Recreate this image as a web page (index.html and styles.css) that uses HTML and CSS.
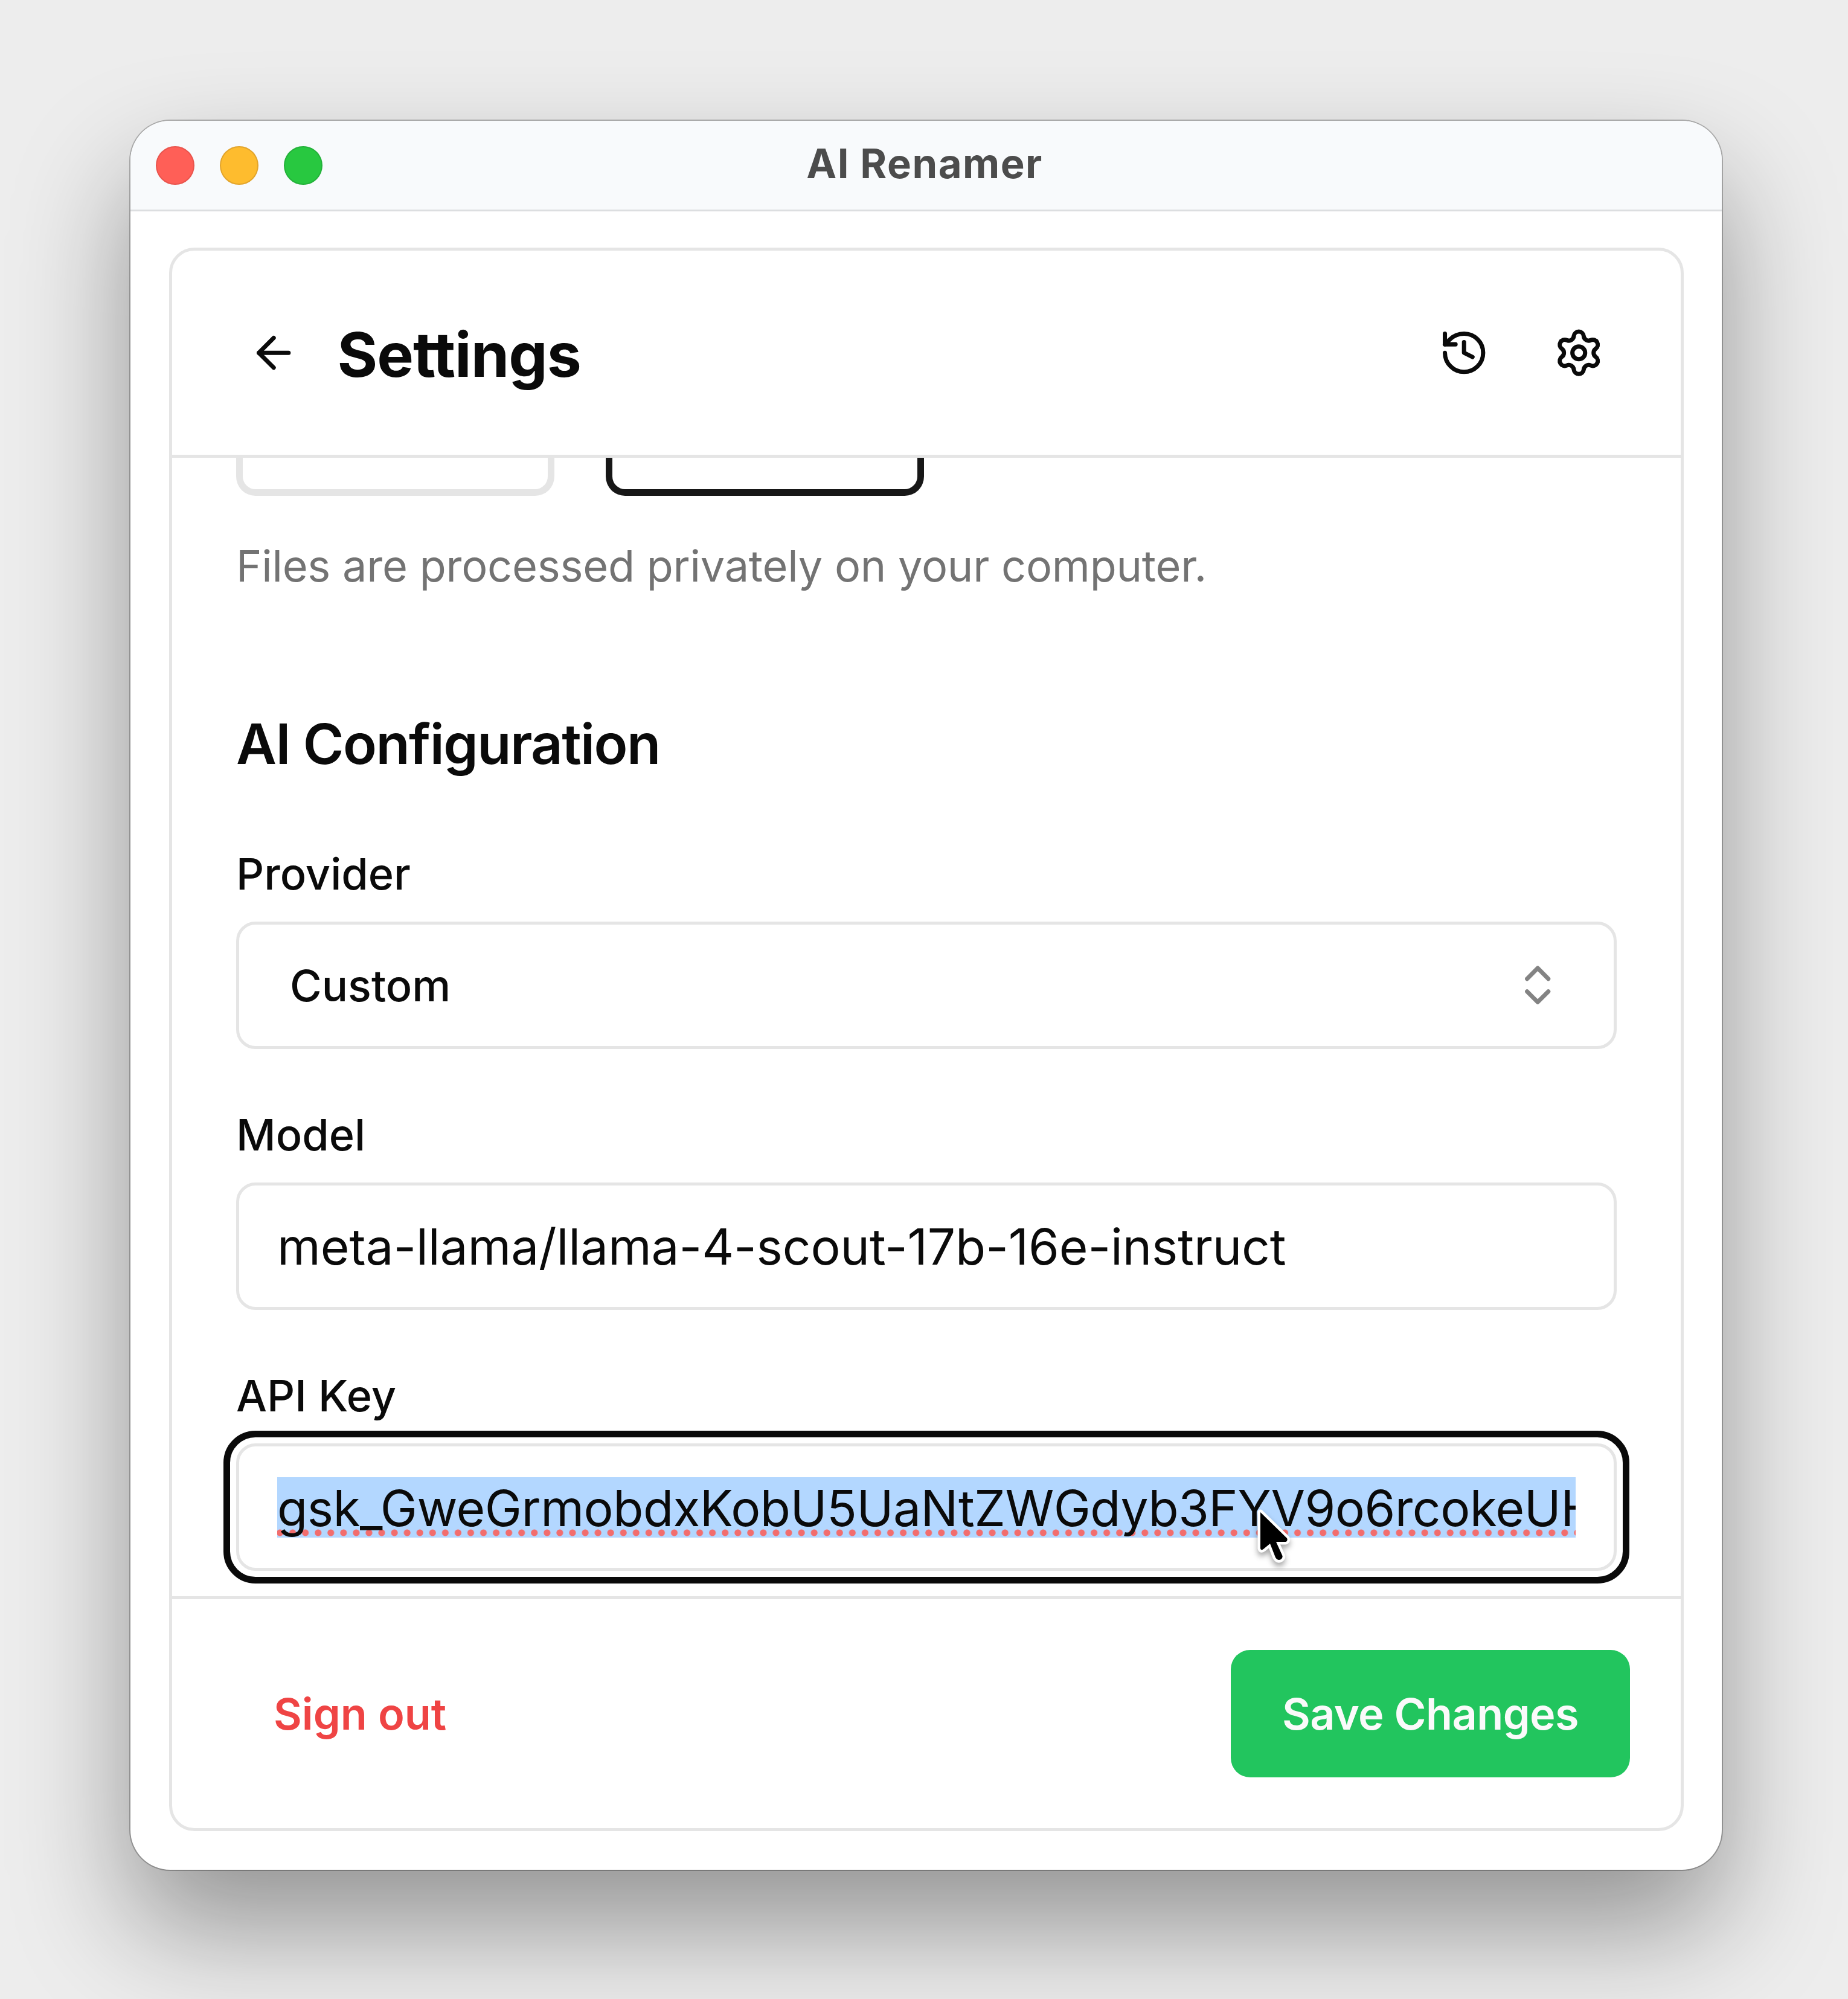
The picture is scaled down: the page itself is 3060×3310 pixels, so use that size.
FILE: index.html
```html
<!DOCTYPE html>
<html lang="en">
<head>
    <meta charset="UTF-8">
    <meta name="viewport" content="width=device-width, initial-scale=1.0">
    <title>AI Renamer</title>
    <link rel="stylesheet" href="styles.css">
</head>
<body>
    <div class="window">
        <div class="titlebar">
            <div class="lights">
                <span class="light light-close"></span>
                <span class="light light-minimize"></span>
                <span class="light light-zoom"></span>
            </div>
            <div class="window-title">AI Renamer</div>
        </div>

        <div class="card">
            <div class="header">
                <svg class="icon" viewBox="0 0 24 24"><path d="m12 19-7-7 7-7"/><path d="M19 12H5"/></svg>
                <h1 class="title">Settings</h1>
                <div class="header-actions">
                    <svg class="icon" viewBox="0 0 24 24"><path d="M3 12a9 9 0 1 0 9-9 9.75 9.75 0 0 0-6.74 2.74L3 8"/><path d="M3 3v5h5"/><path d="M12 7v5l4 2"/></svg>
                    <svg class="icon" viewBox="0 0 24 24"><path d="M9.671 4.136a2.34 2.34 0 0 1 4.659 0 2.34 2.34 0 0 0 3.319 1.915 2.34 2.34 0 0 1 2.33 4.033 2.34 2.34 0 0 0 0 3.831 2.34 2.34 0 0 1-2.33 4.033 2.34 2.34 0 0 0-3.319 1.915 2.34 2.34 0 0 1-4.659 0 2.34 2.34 0 0 0-3.32-1.915 2.34 2.34 0 0 1-2.33-4.033 2.34 2.34 0 0 0 0-3.831A2.34 2.34 0 0 1 6.35 6.051a2.34 2.34 0 0 0 3.319-1.915"/><circle cx="12" cy="12" r="3"/></svg>
                </div>
            </div>

            <div class="content">
                <div class="modes">
                    <div class="mode"></div>
                    <div class="mode mode-selected"></div>
                </div>
                <p class="hint">Files are processed privately on your computer.</p>

                <h2 class="section-title">AI Configuration</h2>

                <div class="form-group">
                    <label>Provider</label>
                    <div class="field select">
                        <span>Custom</span>
                        <svg class="icon icon-muted" viewBox="0 0 24 24"><path d="m7 15 5 5 5-5"/><path d="m7 9 5-5 5 5"/></svg>
                    </div>
                </div>
                <div class="form-group">
                    <label>Model</label>
                    <div class="field input">meta-llama/llama-4-scout-17b-16e-instruct</div>
                </div>
                <div class="form-group">
                    <label>API Key</label>
                    <div class="field input focused">
                        <div class="selection">gsk_GweGrmobdxKobU5UaNtZWGdyb3FYV9o6rcokeUH</div>
                        <svg class="cursor" viewBox="0 0 64 104"><path d="M8 13V73Q9 77 13 74L24 65L33 88Q37 94 42 91Q46 88 44 84L34 62H50Q54 60 52 56Z"/></svg>
                    </div>
                </div>
            </div>

            <div class="footer">
                <button class="button button-danger">Sign out</button>
                <button class="button button-save">Save Changes</button>
            </div>
        </div>
    </div>
</body>
</html>
```

FILE: styles.css
```css
* {
    box-sizing: border-box;
}

body {
    margin: 0;
    padding: 200px 209px 0 216px;
    height: 3310px;
    overflow: hidden;
    background-color: #ededed;
    color: #0a0a0a;
    font-family: Inter, "Liberation Sans", sans-serif;
}

.window {
    display: flex;
    flex-direction: column;
    height: 2896px;
    background: white;
    border-radius: 66px;
    box-shadow: 0 0 0 2px rgba(0,0,0,0.25), 0 95px 190px rgba(0,0,0,0.38);
}

.titlebar {
    display: grid;
    grid-template-columns: 1fr auto 1fr;
    align-items: center;
    height: 150px;
    padding: 0 42px;
    background-color: #f8fafc;
    border-bottom: 3px solid #dcdee0;
    border-radius: 66px 66px 0 0;
}

.lights {
    display: flex;
    gap: 42px;
}

.light {
    width: 64px;
    height: 64px;
    border-radius: 50%;
}

.light-close { background-color: #ff5f57; border: 2px solid #e9544d; }
.light-minimize { background-color: #febc2e; border: 2px solid #e2a42b; }
.light-zoom { background-color: #28c840; border: 2px solid #24b13a; }

.window-title {
    padding: 0 5px 6px 0;
    color: #4c4c4c;
    font-size: 67px;
    font-weight: 700;
    letter-spacing: 1.5px;
    line-height: 84px;
}

.card {
    display: flex;
    flex: 1;
    flex-direction: column;
    margin: 60px 63px 64px 64px;
    border: 5px solid #e5e5e5;
    border-radius: 42px;
    overflow: hidden;
}

.header {
    display: flex;
    align-items: center;
    height: 343px;
    padding: 0 127px 0 126px;
    border-bottom: 5px solid #e5e5e5;
}

.header-actions {
    display: flex;
    gap: 105px;
    margin-left: auto;
}

.title {
    margin: 0 0 0 63px;
    padding-top: 5px;
    font-size: 102px;
    font-weight: 700;
    letter-spacing: -1px;
    line-height: 148px;
}

.icon {
    width: 84.4px;
    height: 84.4px;
    fill: none;
    stroke: currentColor;
    stroke-width: 2;
    stroke-linecap: round;
    stroke-linejoin: round;
}

.icon-muted {
    opacity: 0.5;
}

.content {
    height: 1885px;
    padding: 0 106px;
}

.modes {
    display: flex;
    gap: 85px;
}

.mode {
    width: 527px;
    height: 63px;
    border: 11px solid #e5e5e5;
    border-top: none;
    border-radius: 0 0 32px 32px;
}

.mode-selected {
    border-color: #171717;
}

.hint {
    margin: 62px 0 169px;
    color: #737373;
    font-size: 72px;
    letter-spacing: -0.25px;
    line-height: 107px;
    height: 106px;
}

.section-title {
    margin: 0 0 88px;
    font-size: 92px;
    font-weight: 600;
    letter-spacing: -1.6px;
    line-height: 148px;
}

.form-group {
    margin-bottom: 89px;
}

.form-group label {
    display: block;
    margin-bottom: 26px;
    font-size: 72px;
    font-weight: 540;
    line-height: 106px;
}

.field {
    display: flex;
    align-items: center;
    height: 211px;
    border: 5px solid #e5e5e5;
    border-radius: 32px;
    white-space: nowrap;
}

.select {
    justify-content: space-between;
    padding: 0 84px;
    font-size: 72px;
    font-weight: 540;
}

.input {
    position: relative;
    padding: 3px 63px 0;
    font-size: 82px;
    font-weight: 430;
    letter-spacing: -0.12px;
    line-height: 100px;
}

.focused {
    padding-top: 0;
    letter-spacing: -0.5px;
    outline: 11px solid #0a0a0a;
    outline-offset: 10px;
}

/* selected text with the spell-check dots under it */
.selection {
    width: 100%;
    height: 100px;
    line-height: 103px;
    overflow: hidden;
    background: radial-gradient(circle, #f26d6d 5px, transparent 6px) -6px 86px / 21.07px 12px repeat-x #b3d7ff;
}

.cursor {
    position: absolute;
    left: 1683px;
    top: 96px;
    width: 64px;
    height: 104px;
    overflow: visible;
    fill: black;
    stroke: white;
    stroke-width: 9;
    stroke-linejoin: round;
    paint-order: stroke;
    filter: drop-shadow(0 6px 5px rgba(0,0,0,0.35));
}

.footer {
    display: flex;
    align-items: center;
    justify-content: space-between;
    height: 384px;
    padding: 0 84px;
    border-top: 5px solid #e5e5e5;
}

.button {
    height: 211px;
    padding: 0 84px;
    border: none;
    border-radius: 32px;
    background: none;
    font-family: inherit;
    font-size: 72px;
    font-weight: 560;
    cursor: pointer;
}

.button-danger {
    color: #ef4444;
}

.button-save {
    width: 661px;
    padding: 0;
    background-color: #22c55e;
    color: #fafafa;
    font-weight: 600;
    letter-spacing: -0.6px;
}
```
